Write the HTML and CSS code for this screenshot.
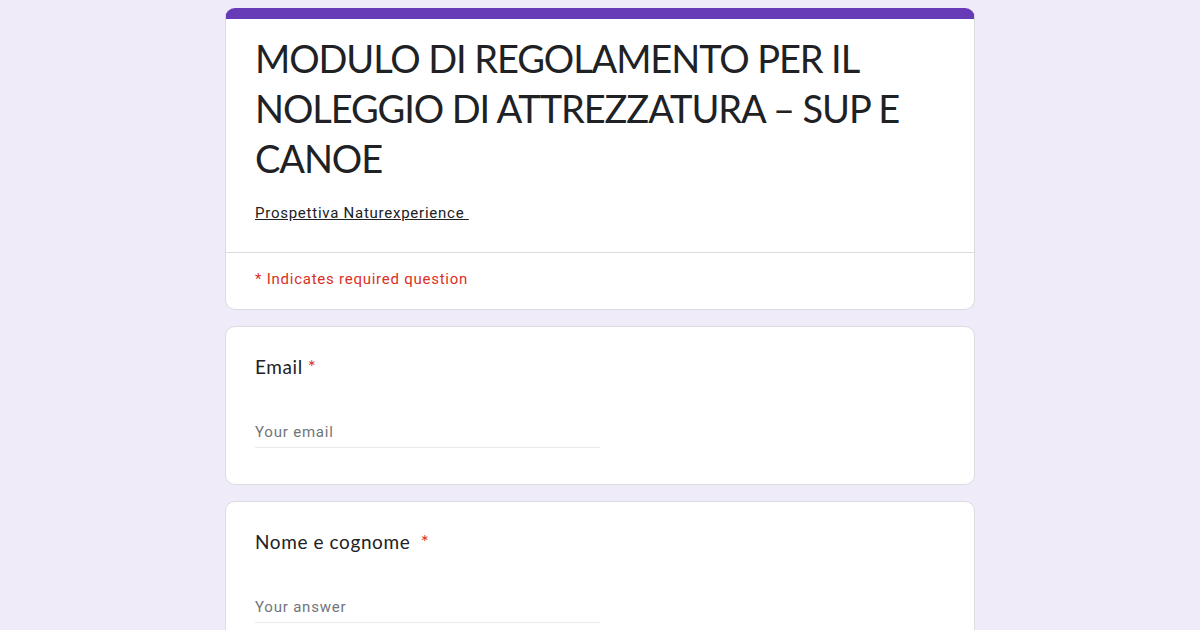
FILE: index.html
```html
<!DOCTYPE html>
<html lang="it">
<head>
<meta charset="utf-8">
<title>MODULO DI REGOLAMENTO PER IL NOLEGGIO DI ATTREZZATURA – SUP E CANOE</title>
<link rel="stylesheet" href="styles.css">
</head>
<body>
<main class="form">
  <section class="card header-card">
    <div class="header-main">
      <h1 class="form-title">MODULO DI REGOLAMENTO PER IL NOLEGGIO DI ATTREZZATURA – SUP E CANOE</h1>
      <div class="form-desc"><a class="desc-link" href="#">Prospettiva Naturexperience&nbsp;</a></div>
    </div>
    <div class="required-note">* Indicates required question</div>
  </section>

  <section class="card question">
    <div class="q-label">Email<span class="req">*</span></div>
    <div class="q-input"><span class="placeholder">Your email</span></div>
  </section>

  <section class="card question">
    <div class="q-label">Nome e cognome&nbsp;<span class="req">*</span></div>
    <div class="q-input"><span class="placeholder">Your answer</span></div>
  </section>
</main>
</body>
</html>
```

FILE: styles.css
```css
* { box-sizing: border-box; }

body {
  margin: 0;
  padding: 8px 0 40px;
  background: #f0ebf8;
  font-family: Roboto, "Liberation Sans", sans-serif;
  color: #202124;
}

.form {
  width: 750px;
  margin: 0 auto;
  display: flex;
  flex-direction: column;
  gap: 16px;
}

.card {
  background: #fff;
  border: 1px solid #dadce0;
  border-radius: 10px;
}

.header-card {
  border-top: 11px solid #673ab7;
}

.header-main {
  padding: 14px 29px 29px;
  border-bottom: 1px solid #dadce0;
}

.form-title {
  margin: 0;
  font-family: Lato, "Open Sans", sans-serif;
  font-weight: 400;
  font-size: 38px;
  line-height: 50px;
  letter-spacing: -1.1px;
  color: #202124;
}

.form-desc {
  margin-top: 20px;
  font-size: 15px;
  line-height: 20px;
  letter-spacing: 0.75px;
}

.desc-link {
  color: #202124;
  text-decoration: underline;
}

.required-note {
  padding: 16px 29px 20px;
  font-size: 15px;
  line-height: 20px;
  letter-spacing: 0.75px;
  color: #d93025;
}

.question {
  padding: 28px 29px 36px;
}

.q-label {
  font-family: Lato, "Open Sans", sans-serif;
  font-size: 19px;
  line-height: 24px;
  letter-spacing: 0.6px;
  color: #202124;
}

.req {
  color: #d93025;
  margin-left: 5px;
}

.q-input {
  margin-top: 43px;
  width: 345px;
  padding-bottom: 5px;
  border-bottom: 1px solid #e8eaed;
  font-size: 15px;
  line-height: 20px;
  letter-spacing: 0.8px;
}

.placeholder {
  color: #70757a;
}
```
